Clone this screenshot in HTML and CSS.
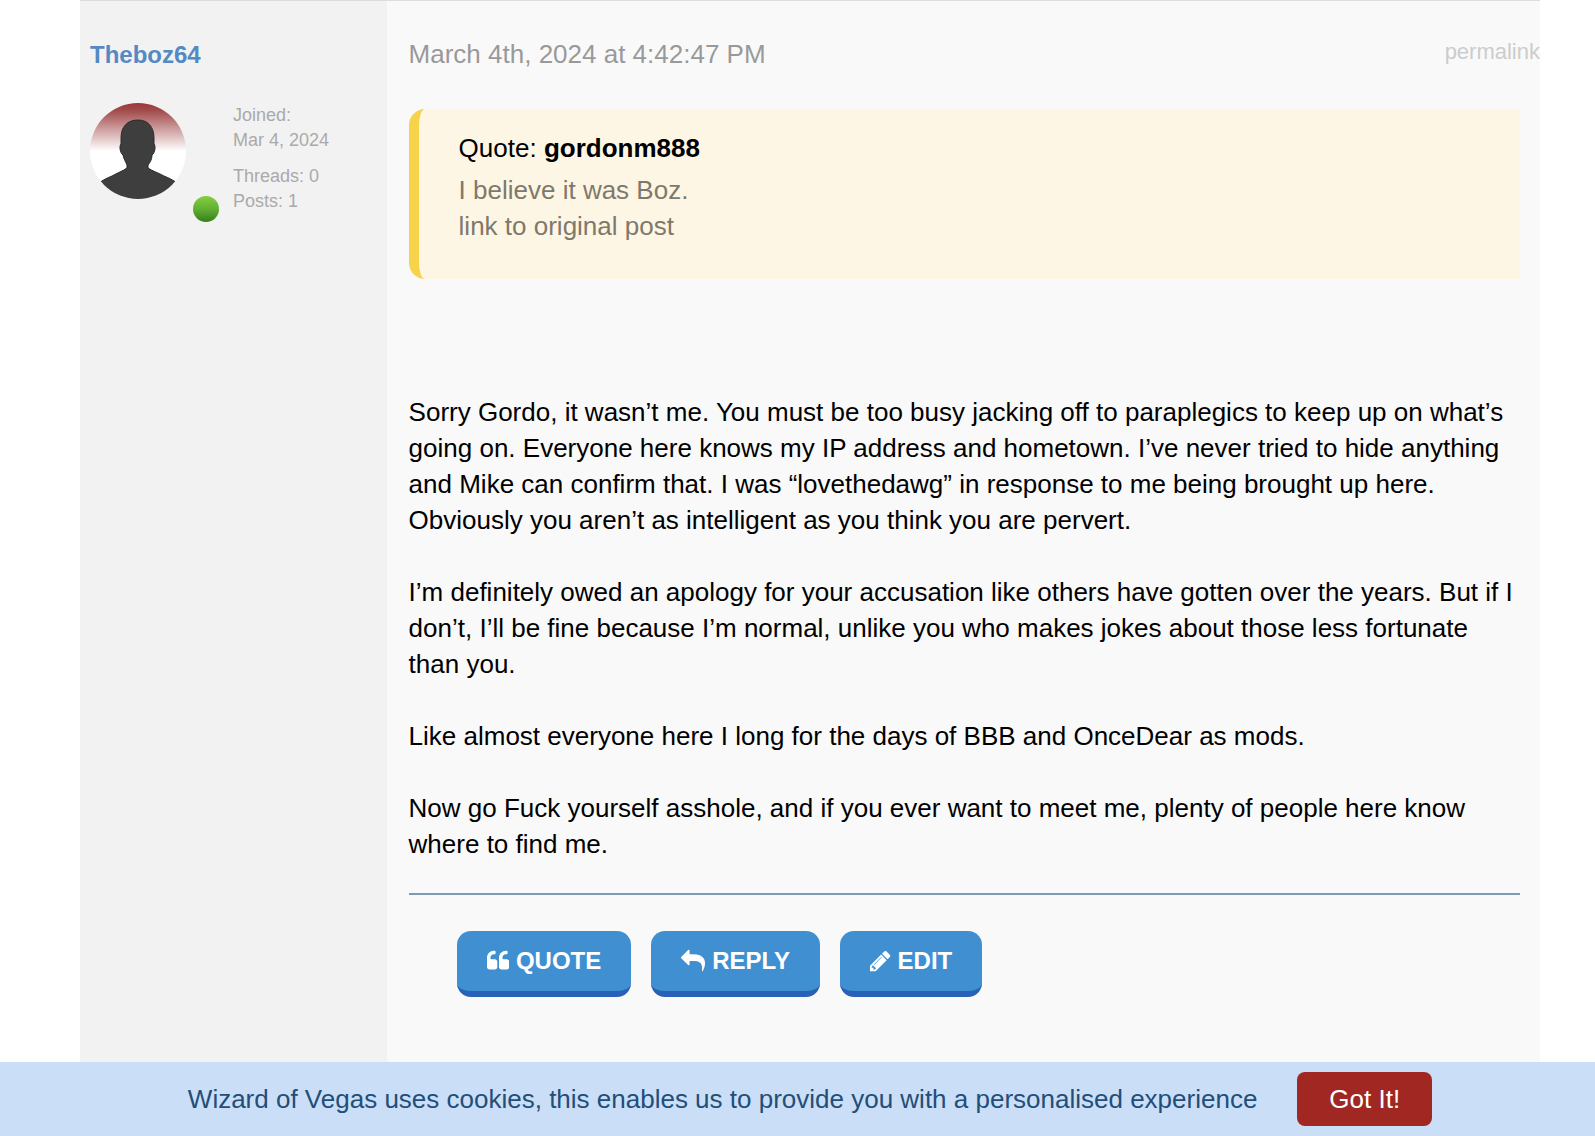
FILE: index.html
```html
<!DOCTYPE html>
<html lang="en">
<head>
    <meta charset="UTF-8">
    <meta name="viewport" content="width=device-width, initial-scale=1.0">
    <title>Wizard of Vegas - Forum</title>
    <link rel="stylesheet" href="styles.css">
</head>
<body>

    <article class="post">
        <aside class="user">
            <a class="username" href="#">Theboz64</a>
            <div class="user-info">
                <svg class="avatar" viewBox="0 0 96 96" role="img" aria-label="Avatar">
                    <defs>
                        <linearGradient id="avatarBg" x1="0" y1="0" x2="0" y2="1">
                            <stop offset="0" stop-color="#98393b"/>
                            <stop offset="0.08" stop-color="#a34c4d"/>
                            <stop offset="0.5" stop-color="#ffffff"/>
                        </linearGradient>
                        <clipPath id="avatarClip"><circle cx="48" cy="48" r="48"/></clipPath>
                    </defs>
                    <g clip-path="url(#avatarClip)">
                        <rect width="96" height="96" fill="url(#avatarBg)"/>
                        <path fill="#3e3e3e" stroke="#2a2a2a" d="M48 17C37 17 31 24 31 35L31 41C29 43 30 50 33 52C34 57 36 59 37 62L37 65C33 68 27 70 22 73C17 75 13 77 9 80L9 98L87 98L87 80C83 77 79 75 74 73C69 70 62 68 58 65L58 62C60 59 62 57 62 52C65 50 66 43 64 41L64 35C64 24 58 17 48 17Z"/>
                    </g>
                </svg>
                <span class="online"></span>
                <div class="stats">
                    <div>Joined:<br>Mar 4, 2024</div>
                    <div>Threads: 0<br>Posts: 1</div>
                </div>
            </div>
        </aside>

        <div class="content">
            <header class="post-header">
                <time datetime="2024-03-04T16:42:47">March 4th, 2024 at 4:42:47 PM</time>
                <a class="permalink" href="#">permalink</a>
            </header>

            <blockquote class="quote">
                <div class="quote-author">Quote: <b>gordonm888</b></div>
                <div class="quote-text">I believe it was Boz.<br><a href="#">link to original post</a></div>
            </blockquote>

            <div class="message">
                <p>Sorry Gordo, it wasn’t me. You must be too busy jacking off to paraplegics to keep up on what’s going on. Everyone here knows my IP address and hometown. I’ve never tried to hide anything and Mike can confirm that. I was “lovethedawg” in response to me being brought up here. Obviously you aren’t as intelligent as you think you are pervert.</p>
                <p>I’m definitely owed an apology for your accusation like others have gotten over the years. But if I don’t, I’ll be fine because I’m normal, unlike you who makes jokes about those less fortunate than you.</p>
                <p>Like almost everyone here I long for the days of BBB and OnceDear as mods.</p>
                <p>Now go Fuck yourself asshole, and if you ever want to meet me, plenty of people here know where to find me.</p>
            </div>

            <hr class="divider">

            <div class="actions">
                <button type="button" class="btn">
                    <svg class="icon" viewBox="64 0 1664 1792" aria-hidden="true"><path d="M832 960v384q0 80-56 136t-136 56h-384q-80 0-136-56t-56-136v-704q0-104 40.500-198.500t109.500-163.500 163.500-109.500 198.500-40.500h64q26 0 45 19t19 45v128q0 26-19 45t-45 19h-64q-106 0-181 75t-75 181v32q0 40 28 68t68 28h224q80 0 136 56t56 136zm896 0v384q0 80-56 136t-136 56h-384q-80 0-136-56t-56-136v-704q0-104 40.500-198.500t109.500-163.500 163.500-109.500 198.500-40.500h64q26 0 45 19t19 45v128q0 26-19 45t-45 19h-64q-106 0-181 75t-75 181v32q0 40 28 68t68 28h224q80 0 136 56t56 136z"/></svg>
                    QUOTE
                </button>
                <button type="button" class="btn">
                    <svg class="icon" viewBox="0 0 1792 1792" aria-hidden="true"><path d="M1792 1120q0 166-127 451-3 7-10.500 24t-13.500 30-13 22q-12 17-28 17-15 0-23.500-10t-8.500-25q0-9 2.500-26.500t2.500-23.500q5-68 5-123 0-101-17.500-181t-48.500-138.500-80-101-105.500-69.500-133-42.500-154-21.500-175.500-6h-224v256q0 26-19 45t-45 19-45-19l-512-512q-19-19-19-45t19-45l512-512q19-19 45-19t45 19 19 45v256h224q713 0 875 403 53 134 53 333z"/></svg>
                    REPLY
                </button>
                <button type="button" class="btn">
                    <svg class="icon" viewBox="128 0 1536 1792" aria-hidden="true"><path d="M491 1536l91-91-235-235-91 91v107h128v128h107zm523-928q0-22-22-22-10 0-17 7l-542 542q-7 7-7 17 0 22 22 22 10 0 17-7l542-542q7-7 7-17zm-54-192l416 416-832 832h-416v-416zm683 96q0 53-37 90l-166 166-416-416 166-165q36-38 90-38 53 0 91 38l235 234q37 39 37 91z"/></svg>
                    EDIT
                </button>
            </div>
        </div>
    </article>

    <div class="cookie-bar">
        <span>Wizard of Vegas uses cookies, this enables us to provide you with a personalised experience</span>
        <button type="button" class="cookie-btn">Got It!</button>
    </div>

</body>
</html>
```
FILE: styles.css
```css
* {
    box-sizing: border-box;
}

body {
    margin: 0;
    background-color: #fff;
    color: #000;
    font-family: "Liberation Sans", Arial, sans-serif;
    font-size: 26px;
    line-height: 36px;
}

a {
    color: inherit;
    text-decoration: none;
}

.post {
    display: flex;
    min-height: 100vh;
    margin: 0 55px 0 80px;
    border-top: 1px solid #ddd;
    background-color: #f9f9f9;
}

/* left column */
.user {
    flex: 0 0 21%;
    padding: 35px 10px;
    background-color: #f2f2f2;
}

.username {
    color: #5489c3;
    font-size: 24px;
    font-weight: bold;
}

.user-info {
    display: flex;
    margin-top: 30px;
}

.avatar {
    width: 96px;
    height: 96px;
}

.online {
    align-self: flex-end;
    width: 26px;
    height: 26px;
    margin: 0 14px 0 7px;
    border-radius: 50%;
    background: linear-gradient(#85cf40, #61b032 50%, #397d1d);
}

.stats {
    display: grid;
    gap: 11px;
    padding-bottom: 8px;
    color: #aaa;
    font-size: 18px;
    line-height: 25px;
}

/* right column */
.content {
    flex: 1;
    padding: 35px 20px 140px 22px;
}

.post-header {
    display: flex;
    justify-content: space-between;
    margin-right: -20px;
    color: #999;
}

.permalink {
    color: #ccc;
    font-size: 22px;
    line-height: 32px;
}

.quote {
    margin: 37px 0 115px;
    padding: 21px 40px 35px;
    border-left: 10px solid #f6d34a;
    border-radius: 16px 0 0 16px;
    background-color: #fef6e4;
}

.quote-author {
    margin-bottom: 6px;
}

.quote-text {
    color: #7f796b;
}

.message p {
    margin: 0 0 36px;
}

.message p:last-child {
    margin-bottom: 31px;
}

.divider {
    height: 2px;
    margin: 0 0 36px;
    border: none;
    background-color: #8199b8;
}

.actions {
    display: flex;
    gap: 20px;
    padding-left: 48px;
}

.btn {
    display: flex;
    align-items: center;
    gap: 7px;
    height: 66px;
    padding: 0 30px;
    border: none;
    border-bottom: 6px solid #2861b8;
    border-radius: 14px;
    background-color: #4090d1;
    color: #fff;
    font-family: inherit;
    font-size: 24px;
    font-weight: bold;
    cursor: pointer;
}

.icon {
    height: 24px;
    fill: currentColor;
}

.cookie-bar {
    position: fixed;
    right: 0;
    bottom: 0;
    left: 0;
    display: flex;
    justify-content: center;
    align-items: center;
    gap: 40px;
    padding: 10px 55px 10px 80px;
    background-color: #cadff7;
    color: #224e79;
}

.cookie-btn {
    height: 54px;
    padding: 0 32px;
    border: none;
    border-radius: 8px;
    background-color: #a12822;
    color: #fff;
    font-family: inherit;
    font-size: 26px;
    cursor: pointer;
}
```
